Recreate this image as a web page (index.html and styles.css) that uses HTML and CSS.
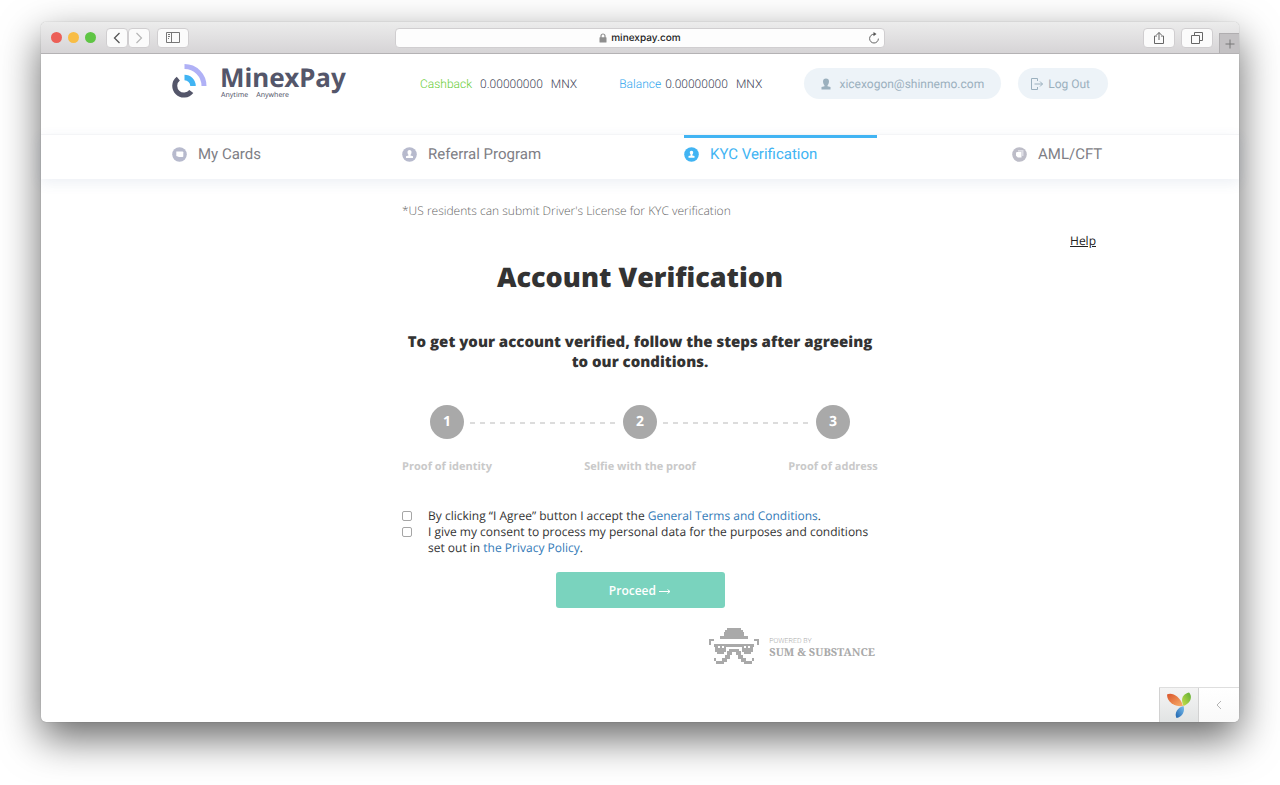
FILE: index.html
```html
<!DOCTYPE html>
<html lang="en">
<head>
    <meta charset="UTF-8">
    <meta name="viewport" content="width=device-width, initial-scale=1.0">
    <title>MinexPay</title>
    <link rel="stylesheet" href="styles.css">
</head>
<body>
    <div class="window">
        <div class="toolbar">
            <div class="toolbar-left">
                <div class="lights">
                    <span class="light red"></span>
                    <span class="light yellow"></span>
                    <span class="light green"></span>
                </div>
                <div class="history">
                    <button class="tool small" aria-label="Back">
                        <svg width="8" height="12" viewBox="0 0 8 12"><path d="M6.5 1 1.5 6l5 5" fill="none" stroke="#555" stroke-width="1.3"/></svg>
                    </button>
                    <button class="tool small" aria-label="Forward">
                        <svg width="8" height="12" viewBox="0 0 8 12"><path d="m1.5 1 5 5-5 5" fill="none" stroke="#b5b5b5" stroke-width="1.2"/></svg>
                    </button>
                </div>
                <button class="tool" aria-label="Sidebar">
                    <svg width="14" height="11" viewBox="0 0 14 11"><path d="M.5.5h13v10H.5zM5.5.5v10M2 2.5h2M2 4.5h2M2 6.5h1" fill="none" stroke="#777"/></svg>
                </button>
            </div>
            <div class="address">
                <svg width="8" height="10" viewBox="0 0 8 10"><path d="M2 5V3a2 2 0 0 1 4 0v2" fill="none" stroke="#8e8e8e" stroke-width="1.2"/><rect x="0.5" y="4.2" width="7" height="5.3" rx="0.6" fill="#8e8e8e"/></svg>
                <span>minexpay.com</span>
                <button class="reload" aria-label="Reload">
                    <svg width="12" height="12" viewBox="0 0 12 12"><path d="M6 2.2A4.4 4.4 0 1 0 10.4 6.6" fill="none" stroke="#666"/><path d="M5.5 0v4.2L8.5 2.1z" fill="#555"/></svg>
                </button>
            </div>
            <div class="toolbar-right">
                <button class="tool" aria-label="Share">
                    <svg width="12" height="14" viewBox="0 0 12 14"><path d="M4 5H1.5v7.5h9V5H8M6 9V1.5M3.5 4 6 1.5 8.5 4" fill="none" stroke="#666"/></svg>
                </button>
                <button class="tool" aria-label="Show tabs">
                    <svg width="12" height="12" viewBox="0 0 12 12"><path d="M.5 3.500h8v8h-8zM3.500 3.500v-3h8v8h-3" fill="none" stroke="#666"/></svg>
                </button>
                <button class="new-tab" aria-label="New tab">
                    <svg width="10" height="10" viewBox="0 0 10 10"><path d="M5 .5v9M.5 5h9" stroke="#777"/></svg>
                </button>
            </div>
        </div>

        <header class="header container">
            <a class="logo" href="#">
                <svg width="36" height="34" viewBox="0 0 36 34" fill="none">
                    <path d="M12.5 2.500A19.500 19.500 0 0 1 32 22" stroke="#b0b1f6" stroke-width="5"/>
                    <path d="M12.5 13.500A8.500 8.500 0 0 1 21 22" stroke="#41b4f3" stroke-width="5.500"/>
                    <path d="M6.300 14.600A9.200 9.200 0 1 0 19.300 27.400" stroke="#54566a" stroke-width="5"/>
                </svg>
                <span class="logo-text">
                    <span class="logo-name">MinexPay</span>
                    <span class="logo-tag"><span>Anytime</span><span>Anywhere</span></span>
                </span>
            </a>
            <div class="balances">
                <div class="balance cashback"><span class="label">Cashback</span> <span>0.00000000</span><span>MNX</span></div>
                <div class="balance"><span class="label">Balance</span> <span>0.00000000</span><span>MNX</span></div>
            </div>
            <div class="account">
                <a class="pill" href="#">
                    <svg width="10" height="12" viewBox="0 0 10 12" fill="#9bb0be"><path d="M5 .5c2 0 3 1.300 3 3S7 7 6.500 7.400v.8L9.500 9v2.500h-9V9l3-.8v-.8C3 7 2 5.200 2 3.500s1-3 3-3z"/></svg>
                    <span>xicexogon@shinnemo.com</span>
                </a>
                <a class="pill logout" href="#">
                    <svg width="12" height="12" viewBox="0 0 12 12" fill="none" stroke="#9bb0be"><path d="M6.500 3V.5h-6v11h6V9M3.500 6h8M9 3.500 11.500 6 9 8.500"/></svg>
                    <span>Log Out</span>
                </a>
            </div>
        </header>

        <nav class="nav">
            <div class="nav-list container">
                <a class="nav-item" href="#">
                    <svg width="15" height="15" viewBox="0 0 15 15"><circle cx="7.500" cy="7.500" r="7.300" fill="#b7bacd"/><path d="M4.300 4.500h6.200q.8 0 .8.800v3.900q0 .8-.8.800H7L4.300 9z" fill="#fff"/></svg>
                    My Cards
                </a>
                <a class="nav-item" href="#">
                    <svg width="15" height="15" viewBox="0 0 15 15"><circle cx="7.500" cy="7.500" r="7.300" fill="#b7bacd"/><path d="M7.500 3c1.400 0 2 1 2 2.200S8.900 7.500 8.500 7.800v.7l2.500.8V11H4V9.300l2.500-.8v-.7C6.100 7.500 5.500 6.400 5.500 5.200S6.100 3 7.500 3z" fill="#fff"/></svg>
                    Referral Program
                </a>
                <a class="nav-item active" href="#">
                    <svg width="15" height="15" viewBox="0 0 15 15"><circle cx="7.500" cy="7.500" r="7.300" fill="#41b4f3"/><path d="M7.500 3.800c1.200 0 1.700.8 1.700 1.800S8.700 7.500 8.300 7.800v.7l2.200.6v1.600h-6V9.100l2.200-.6v-.7C6.300 7.500 5.800 6.600 5.800 5.600s.5-1.800 1.700-1.800z" fill="#fff"/></svg>
                    KYC Verification
                </a>
                <a class="nav-item" href="#">
                    <svg width="15" height="15" viewBox="0 0 15 15"><circle cx="7.500" cy="7.500" r="7.300" fill="#bdbdc8"/><path d="M6 3h5.500v6H10V4.800H6z" fill="#dedee5"/><path d="M4.800 5h4.700v5.500H5.800L4 8.800V5.800z" fill="#fff"/></svg>
                    AML/CFT
                </a>
            </div>
        </nav>

        <main class="content container">
            <p class="note">*US residents can submit Driver's License for KYC verification</p>
            <a class="help" href="#">Help</a>
            <form class="verify">
                <h1>Account Verification</h1>
                <h2>To get your account verified, follow the steps after agreeing to our conditions.</h2>
                <ol class="steps">
                    <li class="step"><span class="num">1</span><span class="step-name">Proof of identity</span></li>
                    <li class="dash"></li>
                    <li class="step"><span class="num">2</span><span class="step-name">Selfie with the proof</span></li>
                    <li class="dash"></li>
                    <li class="step"><span class="num">3</span><span class="step-name">Proof of address</span></li>
                </ol>
                <div class="agree">
                    <input type="checkbox" id="terms">
                    <label for="terms">By clicking “I Agree” button I accept the <a href="#">General Terms and Conditions</a>.</label>
                </div>
                <div class="agree">
                    <input type="checkbox" id="consent">
                    <label for="consent">I give my consent to process my personal data for the purposes and conditions set out in <a href="#">the Privacy Policy</a>.</label>
                </div>
                <button class="proceed" type="button">Proceed <svg width="12" height="8" viewBox="0 0 12 8" fill="none" stroke="#fff"><path d="M0 4.500h11M8.500 2.500l2.500 2-2.500 2"/></svg></button>
                <a class="powered" href="#">
                    <svg width="50" height="38" viewBox="0 0 50 38" fill="#a9a9a9">
                        <path d="M18 0h14v2h2v2h1v4h4v3H11V8h4V4h1V2h2z"/>
                        <path d="M0 11h5v2H2v4H0zM45 11h5v6h-2v-4h-3z"/>
                        <path d="M5 16h40v3h-1v5h-2v2h-7v-2h-2v-5H17v5h-2v2H8v-2H6v-5H5z"/>
                        <path d="M9 18h2v2H9zM13 18h2v2h-2zM35 18h2v2h-2zM39 18h2v2h-2z" fill="#fff"/>
                        <path d="M20 21h10v2h2v4h2v3h3v3h6v3h-8v-2h-3v-3h-3v-4h-2v-3h-4v3h-2v4h-3v3h-3v2H7v-3h6v-3h3v-3h2v-4h2z"/>
                        <path d="M5 30h2v3H5zM43 30h2v3h-2z"/>
                    </svg>
                    <span class="powered-text">
                        <span class="powered-by">POWERED BY</span>
                        <span class="powered-name">SUM &amp; SUBSTANCE</span>
                    </span>
                </a>
            </form>
        </main>

        <div class="debug-bar">
            <button class="debug-logo" aria-label="Debugger">
                <svg width="26" height="28" viewBox="0 0 26 28">
                    <defs>
                        <linearGradient id="leaf-red" x1="0" y1="0" x2="1" y2="1"><stop offset="0" stop-color="#d9542b"/><stop offset="1" stop-color="#f9b06a"/></linearGradient>
                        <linearGradient id="leaf-green" x1="1" y1="0" x2="0" y2="1"><stop offset="0" stop-color="#5fae35"/><stop offset="1" stop-color="#c8e04a"/></linearGradient>
                        <linearGradient id="leaf-blue" x1="1" y1="0" x2="0" y2="1"><stop offset="0" stop-color="#7cc0ee"/><stop offset="1" stop-color="#1c62ad"/></linearGradient>
                    </defs>
                    <path d="M1 3.500C5 1 14 4 17 15 10 16 1 12 1 3.500z" fill="url(#leaf-red)"/>
                    <path d="M23 1.500c4 4 1.500 11-5.500 13.500C14.500 9 16 3 23 1.500z" fill="url(#leaf-green)"/>
                    <path d="M17.500 15c2 5-1.500 11.500-7 12-2.500-5 1-10.500 7-12z" fill="url(#leaf-blue)"/>
                </svg>
            </button>
            <button class="debug-toggle" aria-label="Expand">
                <svg width="6" height="10" viewBox="0 0 6 10"><path d="M5 1 1 5l4 4" fill="none" stroke="#b4b4b4"/></svg>
            </button>
        </div>
    </div>
</body>
</html>
```
FILE: styles.css
```css
* {
    box-sizing: border-box;
}
body {
    margin: 0;
    padding: 22px 41px 63px;
    min-height: 100vh;
    display: flex;
    font-family: "Open Sans", sans-serif;
    text-rendering: geometricPrecision;
    background-color: #fff;
    color: #333;
}
a {
    color: #337ab7;
    text-decoration: none;
}
button {
    font-family: inherit;
    cursor: pointer;
}
svg {
    flex-shrink: 0;
}

/* Browser window */
.window {
    position: relative;
    flex: 1;
    min-width: 0;
    border-radius: 5px;
    background-color: #fff;
    box-shadow: 0 0 1px rgba(0, 0, 0, 0.4), 0 16px 40px rgba(0, 0, 0, 0.6);
}
.toolbar {
    display: grid;
    grid-template-columns: 1fr minmax(0, 490px) 1fr;
    align-items: center;
    height: 32px;
    border-radius: 5px 5px 0 0;
    border-bottom: 1px solid #b4b2b4;
    background: linear-gradient(#ececec, #d6d4d6);
}
.toolbar-left {
    display: flex;
    align-items: center;
    gap: 7px;
    padding-left: 10px;
}
.lights {
    display: flex;
    gap: 6px;
    margin-right: 3px;
}
.light {
    width: 11px;
    height: 11px;
    border-radius: 50%;
}
.red {
    background-color: #ec5f57;
}
.yellow {
    background-color: #f8bd45;
}
.green {
    background-color: #5fc544;
}
.history {
    display: flex;
}
.tool {
    display: flex;
    align-items: center;
    justify-content: center;
    width: 32px;
    height: 20px;
    padding: 0;
    border: 1px solid #d0ced0;
    border-radius: 4px;
    background-color: #fbfbfb;
}
.tool.small {
    width: 22px;
}
.address {
    position: relative;
    display: flex;
    align-items: center;
    justify-content: center;
    gap: 4px;
    height: 20px;
    border: 1px solid #d0ced0;
    border-radius: 4px;
    background-color: #fdfdfd;
    font-family: Inter, sans-serif;
    font-size: 10px;
    font-weight: 500;
    color: #222;
}
.reload {
    position: absolute;
    right: 4px;
    display: flex;
    padding: 0;
    border: none;
    background: none;
}
.toolbar-right {
    display: flex;
    align-items: center;
    align-self: stretch;
    justify-content: flex-end;
    gap: 6px;
}
.new-tab {
    display: flex;
    align-items: center;
    justify-content: center;
    align-self: flex-end;
    width: 20px;
    height: 20px;
    padding: 0;
    border: 1px solid #b0aeb0;
    border-width: 1px 0 0 1px;
    background-color: #c3c1c3;
}

/* Header */
.container {
    width: 100%;
    max-width: 936px;
    margin: 0 auto;
}
.header {
    display: flex;
    align-items: flex-start;
    justify-content: space-between;
    height: 80px;
    padding-top: 10px;
    font-family: Roboto, sans-serif;
    font-size: 12px;
}
.logo {
    display: flex;
    gap: 12px;
    margin-right: 32px;
}
.logo-text {
    display: flex;
    flex-direction: column;
    font-family: "Noto Sans", sans-serif;
    color: #54566a;
}
.logo-name {
    font-size: 26px;
    font-weight: 700;
    line-height: 26px;
}
.logo-tag {
    display: flex;
    gap: 8px;
    padding-left: 1px;
    font-size: 7px;
    line-height: 12px;
}
.balances {
    display: flex;
    gap: 42px;
    line-height: 40px;
}
.balance {
    display: flex;
    gap: 8px;
    font-weight: 300;
    color: #44465a;
}
.label {
    margin-right: -4px;
    color: #2ea5ee;
}
.cashback .label {
    margin-right: 0;
    color: #66cc33;
}
.account {
    display: flex;
    gap: 17px;
    padding-top: 4px;
}
.pill {
    display: flex;
    align-items: center;
    gap: 8px;
    height: 31px;
    padding: 0 17px;
    border-radius: 16px;
    background-color: #edf3f8;
    color: #9bb0be;
}
.logout {
    gap: 5px;
    padding: 0 18px 0 13px;
}

/* Main menu */
.nav {
    border-top: 1px solid #f4f5f7;
    box-shadow: 0 4px 12px rgba(80, 110, 160, 0.1);
}
.nav-list {
    display: grid;
    grid-template-columns: 230fr 282fr 328fr 96fr;
    height: 44px;
}
.nav-item {
    display: flex;
    align-items: center;
    justify-self: start;
    gap: 11px;
    padding-bottom: 6px;
    font-family: Roboto, sans-serif;
    font-size: 15px;
    white-space: nowrap;
    color: #7e7e85;
}
.nav-item.active {
    width: 193px;
    padding-bottom: 9px;
    border-top: 3px solid #41b4f3;
    color: #41b4f3;
}

/* Verification form */
.content {
    display: flex;
    flex-direction: column;
    padding-top: 24px;
}
.note,
.verify {
    width: 100%;
    max-width: 476px;
    margin: 0 auto;
}
.note {
    font-size: 12px;
    font-weight: 300;
    line-height: 16px;
    color: #666;
}
.help {
    align-self: flex-end;
    margin: 14px 12px 0 0;
    font-size: 12px;
    line-height: 16px;
    text-decoration: underline;
    color: #222;
}
.verify {
    display: flex;
    flex-direction: column;
}
h1 {
    margin: 8px 0 35px;
    font-size: 27px;
    font-weight: 800;
    line-height: 40px;
    text-align: center;
}
h2 {
    margin: 0 0 33px;
    font-size: 15px;
    font-weight: 800;
    line-height: 20px;
    text-align: center;
}
.steps {
    display: flex;
    margin: 0 0 33px;
    padding: 0 28px;
    list-style: none;
}
.step {
    display: flex;
    flex-direction: column;
    align-items: center;
    gap: 20px;
    width: 34px;
}
.num {
    width: 34px;
    height: 34px;
    border-radius: 50%;
    background-color: #a9a9a9;
    font-size: 14px;
    font-weight: 700;
    line-height: 34px;
    text-align: center;
    color: #fff;
}
.step-name {
    font-size: 11px;
    font-weight: 700;
    line-height: 16px;
    white-space: nowrap;
    color: #c9c9c9;
}
.dash {
    flex: 1;
    height: 2px;
    margin: 17px 5px 0 6px;
    background: repeating-linear-gradient(to right, #dcdcdc 0 5px, transparent 5px 10px);
}
.agree {
    display: flex;
    align-items: flex-start;
    gap: 16px;
    font-size: 12px;
    line-height: 16px;
}
.agree input {
    appearance: none;
    width: 10px;
    height: 10px;
    margin: 3px 0 0;
    border: 1px solid #a6a6a6;
    border-radius: 2px;
    background-color: #fff;
}
.agree input:checked {
    background-color: #337ab7;
}
.agree label {
    flex: 1;
}
.proceed {
    align-self: center;
    width: 169px;
    height: 36px;
    margin: 16px 0 20px;
    border: none;
    border-radius: 3px;
    background-color: #7ad3be;
    font-size: 12px;
    font-weight: 600;
    color: #fff;
}
.powered {
    display: flex;
    align-items: center;
    align-self: flex-end;
    gap: 10px;
    margin-right: 3px;
}
.powered-text {
    display: flex;
    flex-direction: column;
    padding-top: 2px;
}
.powered-by {
    font-family: Roboto, sans-serif;
    font-size: 7px;
    font-weight: 300;
    line-height: 10px;
    color: #aaa;
}
.powered-name {
    font-family: "Noto Serif", "DejaVu Serif", serif;
    font-size: 11px;
    font-weight: 700;
    line-height: 14px;
    color: #a9a9a9;
}

/* Debug panel pinned over the page corner */
.debug-bar {
    position: absolute;
    right: 0;
    bottom: 0;
    display: flex;
    height: 35px;
    border-top: 1px solid #dedede;
}
.debug-logo,
.debug-toggle {
    display: flex;
    align-items: center;
    justify-content: center;
    width: 40px;
    padding: 0;
    border: none;
    border-radius: 0 0 5px 0;
    background: linear-gradient(#fff, #f9f9f9);
}
.debug-logo {
    border: 1px solid #d2d2d2;
    border-width: 0 1px;
    border-radius: 0;
    background: linear-gradient(#f4f4f4, #e2e4e4);
}
```
